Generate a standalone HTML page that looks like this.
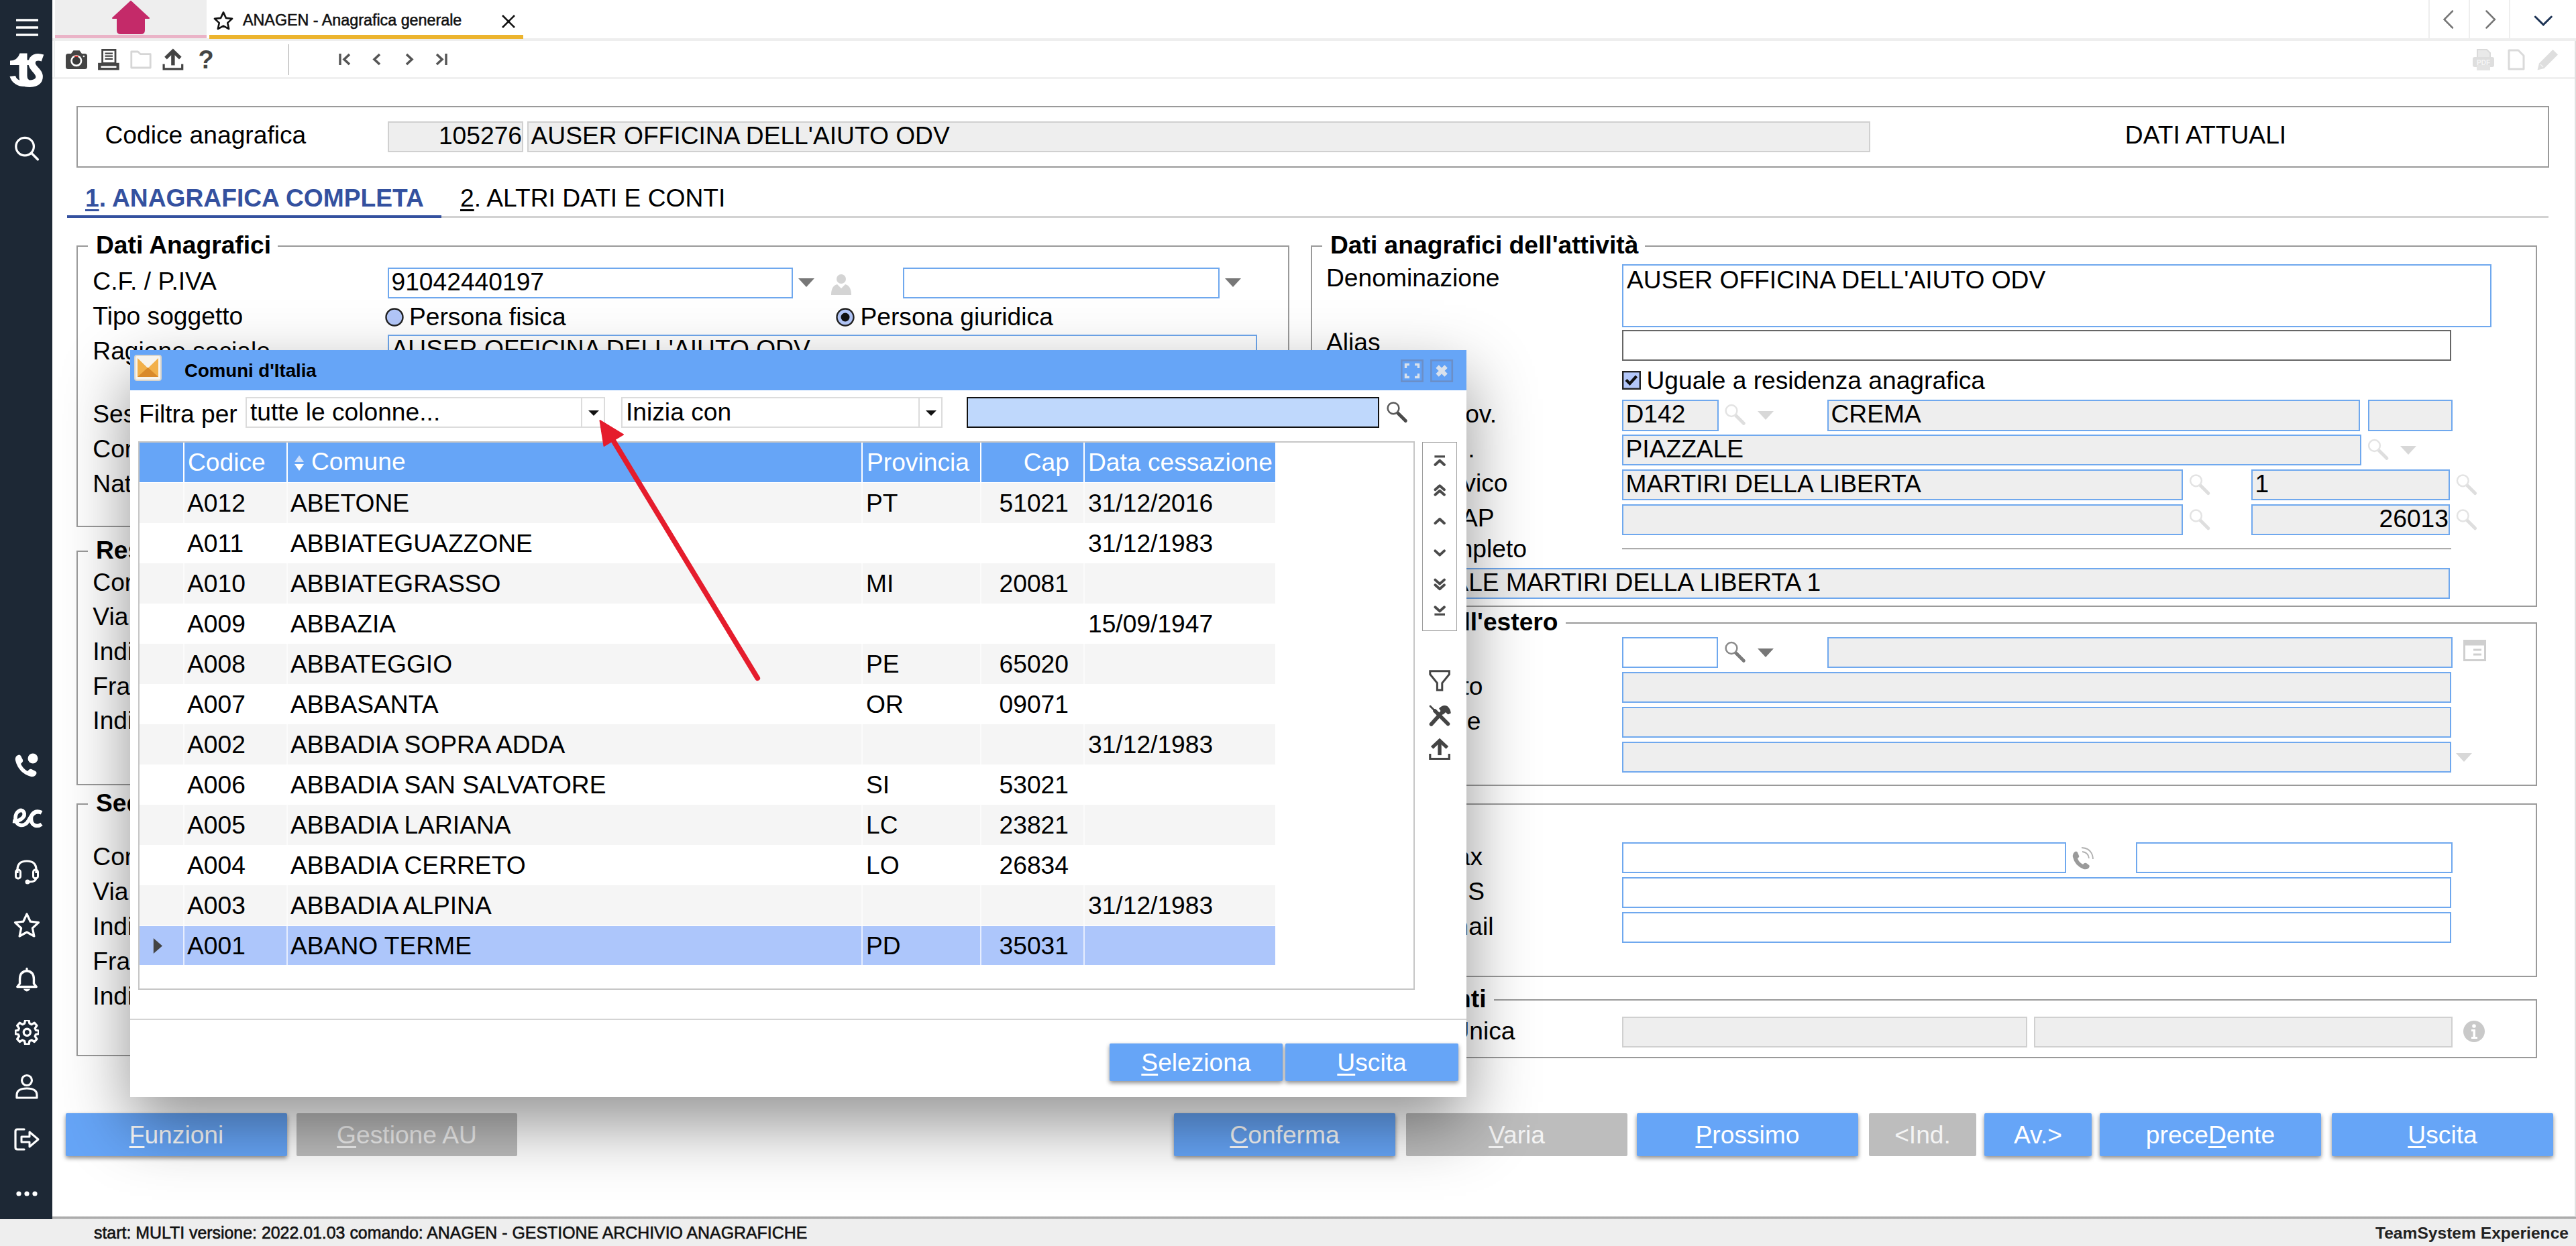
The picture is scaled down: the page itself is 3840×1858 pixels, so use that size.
<!DOCTYPE html>
<html lang="it"><head><meta charset="utf-8"><title>ANAGEN - Anagrafica generale</title>
<style>
html,body{margin:0;padding:0;background:#fff;}
body{width:3840px;height:1858px;overflow:hidden;font-family:"Liberation Sans",sans-serif;}
#root{position:relative;width:3840px;height:1858px;overflow:hidden;background:#fff;}
#root div,#root svg.a{position:absolute;box-sizing:border-box;}
.t{white-space:nowrap;}
.i{font-size:37.2px;white-space:nowrap;overflow:hidden;padding:0 0 0 3.5px;color:#000;}
.ib{background:#fff;border:2px solid #6fa8ee;}
.id{background:#eee;border:2px solid #6fa8ee;}
.ir{background:#eee;border:2px solid #d0d0d0;}
.ik{background:#fff;border:2px solid #666;}
.grp{border:2px solid #9a9a9a;}
.btn{background:#66a5f7;color:#fff;font-size:37.2px;text-align:center;box-shadow:0 3px 6px rgba(0,0,0,.45);border-radius:2px;}
.btn.g{background:#bdbdbd;color:#f4f4f4;box-shadow:none;}
u{text-decoration-thickness:3px;text-underline-offset:4px;}

</style></head>
<body>
<div id="root">
<div style="left:78.0px;top:57.0px;width:3762.0px;height:4.0px;background:#eeeeee;"></div>
<div style="left:78.0px;top:115.0px;width:3762.0px;height:3.0px;background:#f0f0f0;"></div>
<div style="left:82.0px;top:0.0px;width:226.0px;height:57.0px;background:#eeeeee;"></div>
<div style="left:82.0px;top:52.0px;width:226.0px;height:5.4px;background:#eab3c7;"></div>
<svg class="a" style="left:166.0px;top:1.0px;" width="58" height="50" viewBox="0 0 58 50"><path d="M29 1 L56 26 H49 V44 Q49 49 44 49 H14 Q9 49 9 44 V26 H2 Z" fill="#c42a69" stroke="#c42a69" stroke-width="2" stroke-linejoin="round"/></svg>
<div style="left:312.0px;top:52.0px;width:468.0px;height:5.5px;background:#ecb42e;"></div>
<svg class="a" style="left:318.0px;top:16.0px;" width="30" height="29" viewBox="0 0 32 31"><path d="M16 2.5 L20.2 11.6 L30 12.7 L22.7 19.4 L24.7 29 L16 24.1 L7.3 29 L9.3 19.4 L2 12.7 L11.8 11.6 Z" fill="none" stroke="#111" stroke-width="2.8" stroke-linejoin="round"/></svg>
<div class="t" style="top:17.4px;font-size:23.3px;line-height:27px;color:#111;left:362.0px;-webkit-text-stroke:0.55px #111;">ANAGEN - Anagrafica generale</div>
<svg class="a" style="left:747.0px;top:21.0px;" width="22" height="22" viewBox="0 0 22 22"><path d="M2 2 L20 20 M20 2 L2 20" stroke="#111" stroke-width="2.6" fill="none"/></svg>
<div style="left:3620.0px;top:0.0px;width:2.0px;height:57.0px;background:#eeeeee;"></div>
<div style="left:3680.0px;top:0.0px;width:2.0px;height:57.0px;background:#eeeeee;"></div>
<div style="left:3740.0px;top:0.0px;width:2.0px;height:57.0px;background:#eeeeee;"></div>
<svg class="a" style="left:3636px;top:10px;" width="28" height="38" viewBox="3636 10 28 38"><path d="M3656 16.500 L3643.600 29 L3656 41.500" stroke="#777" stroke-width="2.5" stroke-linecap="round" fill="none"/></svg>
<svg class="a" style="left:3699px;top:10px;" width="28" height="38" viewBox="3699 10 28 38"><path d="M3706.500 16.500 L3718.900 29 L3706.500 41.500" stroke="#777" stroke-width="2.5" stroke-linecap="round" fill="none"/></svg>
<svg class="a" style="left:3772px;top:18px;" width="38" height="26" viewBox="3772 18 38 26"><path d="M3779.300 25 L3791.300 36.800 L3803.300 25" stroke="#1f3556" stroke-width="3" stroke-linecap="round" fill="none"/></svg>
<svg class="a" style="left:96px;top:73px;" width="37" height="33" viewBox="96 73 37 33"><path d="M101.5 80 H106 L109.5 75.3 H118.5 L122 80 H126.5 Q130 80 130 83.5 V99.5 Q130 103 126.5 103 H101.5 Q98 103 98 99.5 V83.5 Q98 80 101.5 80 Z" fill="#444"/><circle cx="113.8" cy="90.6" r="7.3" fill="#3a3a3a" stroke="#fff" stroke-width="2.6"/><path d="M110.6 83.6 Q113.8 82 117 83.6 L116 85.2 Q113.8 84.4 111.6 85.2 Z" fill="#d8322c"/><circle cx="124.9" cy="84" r="1.3" fill="#eee"/></svg>
<svg class="a" style="left:144px;top:72px;" width="36" height="34" viewBox="144 72 36 34"><rect x="152.6" y="74.4" width="19.4" height="20" fill="#fff" stroke="#444" stroke-width="2.8"/><path d="M156.5 79.7 H168 M156.5 83.7 H168 M156.5 87.8 H168" stroke="#444" stroke-width="2.2"/><rect x="146.1" y="93.8" width="31.6" height="10.6" fill="#444"/><rect x="150.5" y="98.4" width="23" height="2.6" fill="#fff"/></svg>
<svg class="a" style="left:192px;top:73px;" width="36" height="32" viewBox="192 73 36 32"><path d="M195.8 77 H205.5 L209.5 80.7 H224.2 V101 H195.8 Z" fill="#fff" stroke="#d6d6d6" stroke-width="2.8" stroke-linejoin="round"/></svg>
<svg class="a" style="left:240px;top:72px;" width="36" height="35" viewBox="240 72 36 35"><path d="M247.0 86.6 L257.9 76.1 L268.8 86.6" fill="none" stroke="#444" stroke-width="5.2" stroke-linejoin="miter"/><path d="M257.9 78.6 V97.39999999999999" stroke="#444" stroke-width="5.4"/><path d="M244.1 95.39999999999999 V102.8 H271.7 V95.39999999999999" fill="none" stroke="#444" stroke-width="3.2"/></svg>
<div class="t" style="top:67.3px;font-size:38px;line-height:44px;color:#444;font-weight:bold;left:295.5px;">?</div>
<div style="left:429.5px;top:66.0px;width:1.5px;height:46.0px;background:#a8a8a8;"></div>
<svg class="a" style="left:504.0px;top:79.0px;" width="20" height="19" viewBox="0 0 20 19"><path d="M3 1 V18" stroke="#555" stroke-width="3.4"/><path d="M17 2 L9 9.5 L17 17" stroke="#555" stroke-width="3.6" fill="none"/></svg>
<svg class="a" style="left:554.0px;top:79.0px;" width="16" height="19" viewBox="0 0 16 19"><path d="M12 2 L4 9.5 L12 17" stroke="#555" stroke-width="3.6" fill="none"/></svg>
<svg class="a" style="left:602.0px;top:79.0px;" width="16" height="19" viewBox="0 0 16 19"><path d="M4 2 L12 9.5 L4 17" stroke="#555" stroke-width="3.6" fill="none"/></svg>
<svg class="a" style="left:648.0px;top:79.0px;" width="20" height="19" viewBox="0 0 20 19"><path d="M17 1 V18" stroke="#555" stroke-width="3.4"/><path d="M3 2 L11 9.5 L3 17" stroke="#555" stroke-width="3.6" fill="none"/></svg>
<svg class="a" style="left:3685.0px;top:72.0px;" width="34" height="34" viewBox="0 0 34 34"><path d="M8 2 H22 L27 7 V14 H8 Z" fill="#e9e9e9" stroke="#dadada" stroke-width="2"/><rect x="1" y="13" width="32" height="15" rx="3" fill="#dedede"/><rect x="7" y="25" width="20" height="8" fill="#e4e4e4"/><text x="17" y="25" font-family="Liberation Sans, sans-serif" font-size="10" font-weight="bold" fill="#f6f6f6" text-anchor="middle">PDF</text></svg>
<svg class="a" style="left:3738.0px;top:73.0px;" width="26" height="32" viewBox="0 0 26 32"><path d="M2 2 H16 L24 10 V30 H2 Z" fill="#fff" stroke="#dadada" stroke-width="3" stroke-linejoin="round"/></svg>
<svg class="a" style="left:3781.0px;top:72.0px;" width="34" height="34" viewBox="0 0 34 34"><path d="M1.5 32.500 L4 22.500 L24.500 2 L32 9.500 L11.500 30 Z" fill="#dedede"/><path d="M6 24 L10 28" stroke="#f4f4f4" stroke-width="1.5"/></svg>
<div style="left:0.0px;top:1813.6px;width:3840.0px;height:4.8px;background:linear-gradient(#a2a2a2,#bcbcbc);"></div>
<div style="left:0.0px;top:1818.4px;width:3840.0px;height:39.6px;background:#eeeeee;"></div>
<div class="t" style="top:1823.9px;font-size:24.9px;line-height:29px;color:#111;left:140.0px;-webkit-text-stroke:0.6px #111;">start: MULTI versione: 2022.01.03 comando: ANAGEN - GESTIONE ARCHIVIO ANAGRAFICHE</div>
<div class="t" style="top:1824.5px;font-size:24.6px;line-height:28px;color:#222;font-weight:bold;right:11.0px;text-align:right;">TeamSystem Experience</div>
<div style="left:3837.5px;top:61.0px;width:2.5px;height:1752.0px;background:#e0e0e0;"></div>
<div style="left:80.0px;top:61.0px;width:2.0px;height:56.0px;background:#eef0f0;"></div>
<div style="left:0.0px;top:0.0px;width:78.0px;height:1818.0px;background:#1d2835;"></div>
<svg class="a" style="left:24.0px;top:27.0px;" width="33" height="28" viewBox="0 0 33 28"><path d="M1 3 H32 M1 14 H32 M1 25 H32" stroke="#fff" stroke-width="3.4" stroke-linecap="round"/></svg>
<svg class="a" style="left:12px;top:76px;" width="56" height="57" viewBox="12 76 56 57"><path d="M29.5 79.5 H40.5 V89.5 H49 V97 H40.5 V113 Q40.5 119 46 121 L41 128.5 Q28 126 28.5 113 V97 H15 V90.5 Q26 90.5 29.500 79.5 Z" fill="#fff"/><path d="M63.5 86.5 C55 83.5 47.5 86 47.5 94 C47.500 103 60 106 58.500 116 C57.500 123.500 48 126 38 124" fill="none" stroke="#fff" stroke-width="10.5"/><path d="M14.5 114 C19 128 34 132 47 127 L42 118 C32 122 25 120 23 113 Z" fill="#fff"/></svg>
<svg class="a" style="left:18px;top:200px;" width="44" height="43" viewBox="18 200 44 43"><circle cx="37.1" cy="218.6" r="13.3" fill="none" stroke="#fff" stroke-width="3.3"/><path d="M46.8 228.3 L56.3 237.8" stroke="#fff" stroke-width="3.5" stroke-linecap="round"/></svg>
<svg class="a" style="left:20.0px;top:1121.0px;" width="40" height="40" viewBox="0 0 40 40"><path d="M5 6 Q9 3 11 6 L14 12 Q15 14 13 16 L11 18 Q14 25 21 29 L23 27 Q25 25 27 26 L33 29 Q36 31 33 35 Q30 38 26 37 Q8 32 3 13 Q2 9 5 6 Z" fill="#fff"/><circle cx="29" cy="10" r="7.5" fill="#fff"/></svg>
<svg class="a" style="left:14px;top:1198px;" width="54" height="44" viewBox="14 1198 54 44"><path d="M19 1224.500 C29 1225.500 39 1218 35.500 1211 C32.500 1205.500 23 1209 23 1220 C23 1232 36 1234 42 1224.500 C46 1217 51 1208 61.500 1211.500" fill="none" stroke="#fff" stroke-width="5.6" stroke-linecap="butt"/><path d="M62 1212 C53 1207 45.500 1213 46.500 1222.500 C47.500 1232 56 1233.500 62 1229" fill="none" stroke="#fff" stroke-width="5.6"/></svg>
<svg class="a" style="left:20.0px;top:1280.0px;" width="40" height="40" viewBox="0 0 40 40"><path d="M6 22 V17 Q6 4 20 4 Q34 4 34 17 V22" fill="none" stroke="#fff" stroke-width="3.2"/><rect x="3.5" y="17" width="7" height="13" rx="3.2" fill="none" stroke="#fff" stroke-width="3"/><rect x="29.500" y="17" width="7" height="13" rx="3.2" fill="none" stroke="#fff" stroke-width="3"/><path d="M34 28 Q34 35 24 35" fill="none" stroke="#fff" stroke-width="3"/><circle cx="21" cy="35" r="3.5" fill="#fff"/></svg>
<svg class="a" style="left:20.0px;top:1360.0px;" width="40" height="40" viewBox="0 0 40 40"><path d="M20 3 L25.3 14.2 L37.5 15.6 L28.4 24 L30.9 36 L20 30 L9.1 36 L11.6 24 L2.5 15.6 L14.7 14.2 Z" fill="none" stroke="#fff" stroke-width="3.2" stroke-linejoin="round"/></svg>
<svg class="a" style="left:21.0px;top:1441.5px;" width="38" height="40" viewBox="0 0 40 42"><path d="M20 6 Q9 7 9 19 V26 L5 31 H35 L31 26 V19 Q31 7 20 6 Z" fill="none" stroke="#fff" stroke-width="3.6" stroke-linejoin="round"/><path d="M20 2.500 V6" stroke="#fff" stroke-width="3.4" stroke-linecap="round"/><path d="M16 35 Q20 40 24 35 Z" fill="#fff" stroke="#fff" stroke-width="1.5"/></svg>
<svg class="a" style="left:21.7px;top:1521.0px;" width="36.6" height="36.6" viewBox="0 0 40 40"><path d="M17 2 H23 L24 7 L27.5 8.8 L32 6 L36 10.5 L33 15 L34.3 18 L39 19 V24 L34.3 25 L33 28 L36 32.5 L32 37 L27.5 34.2 L24 36 L23 41 H17 L16 36 L12.5 34.2 L8 37 L4 32.5 L7 28 L5.7 25 L1 24 V19 L5.7 18 L7 15 L4 10.5 L8 6 L12.5 8.8 L16 7 Z" transform="translate(0,-1.5)" fill="none" stroke="#fff" stroke-width="3.6" stroke-linejoin="round"/><circle cx="20" cy="20" r="5.5" fill="none" stroke="#fff" stroke-width="3.6"/></svg>
<svg class="a" style="left:22.0px;top:1600.0px;" width="36" height="40" viewBox="0 0 36 40"><circle cx="18" cy="11" r="7.5" fill="none" stroke="#fff" stroke-width="3.2"/><path d="M3 37 V33 Q3 23 18 23 Q33 23 33 33 V37 Z" fill="none" stroke="#fff" stroke-width="3.2" stroke-linejoin="round"/></svg>
<svg class="a" style="left:20.0px;top:1681.0px;" width="40" height="36" viewBox="0 0 40 36"><path d="M16 3 H6 Q3 3 3 6 V30 Q3 33 6 33 H16" fill="none" stroke="#fff" stroke-width="3.2" stroke-linecap="round"/><path d="M12 14 H24 V7 L37 18 L24 29 V22 H12 Z" fill="none" stroke="#fff" stroke-width="3" stroke-linejoin="round"/></svg>
<svg class="a" style="left:23.0px;top:1774.0px;" width="34" height="12" viewBox="0 0 34 12"><circle cx="5" cy="6" r="3.6" fill="#fff"/><circle cx="17" cy="6" r="3.6" fill="#fff"/><circle cx="29" cy="6" r="3.6" fill="#fff"/></svg>
<div style="left:114.0px;top:158.0px;width:3686.0px;height:92.0px;border:2px solid #9a9a9a;"></div>
<div class="t" style="top:179.6px;font-size:37.2px;line-height:43px;color:#000;left:156.5px;">Codice anagrafica</div>
<div class="i ir" style="left:578.0px;top:180.5px;width:202.0px;height:46.3px;line-height:39.7px;text-align:right;padding-right:0px;">105276</div>
<div class="i ir" style="left:786.0px;top:180.5px;width:2002.0px;height:46.3px;line-height:39.7px;">AUSER OFFICINA DELL'AIUTO ODV</div>
<div class="t" style="top:179.6px;font-size:37.2px;line-height:43px;color:#000;left:2288.0px;width:2000px;text-align:center;">DATI ATTUALI</div>
<div style="left:100.0px;top:322.0px;width:3699.0px;height:3.0px;background:#d2d2d2;"></div>
<div style="left:100.0px;top:320.6px;width:558.0px;height:4.4px;background:#34519f;"></div>
<div class="t" style="top:273.6px;font-size:37.2px;line-height:43px;color:#34519f;font-weight:bold;left:127.0px;"><u>1</u>. ANAGRAFICA COMPLETA</div>
<div class="t" style="top:273.6px;font-size:37.2px;line-height:43px;color:#000;left:686.0px;"><u>2</u>. ALTRI DATI E CONTI</div>
<div class="grp" style="left:114.0px;top:366.0px;width:1808.0px;height:420.0px;"></div>
<div style="left:131.0px;top:363.0px;width:283.0px;height:8.0px;background:#fff;"></div>
<div class="t" style="top:344.1px;font-size:37.2px;line-height:43px;color:#000;font-weight:bold;left:143.0px;">Dati Anagrafici</div>
<div class="t" style="top:397.6px;font-size:37.2px;line-height:43px;color:#000;left:138.3px;">C.F. / P.IVA</div>
<div class="i ib" style="left:578.0px;top:399.0px;width:604.0px;height:45.8px;line-height:39.2px;">91042440197</div>
<svg class="a" style="left:1190.0px;top:415.0px;" width="24" height="13" viewBox="0 0 24 13"><path d="M0 0 H24 L12 13 Z" fill="#777"/></svg>
<svg class="a" style="left:1238.0px;top:408.0px;" width="32" height="33" viewBox="0 0 32 33"><circle cx="16" cy="8" r="7" fill="#d4d4d4"/><path d="M1 32 Q1 18 10 16 L16 22 L22 16 Q31 18 31 32 Z" fill="#d4d4d4"/></svg>
<div class="i ib" style="left:1346.0px;top:399.0px;width:472.0px;height:45.8px;line-height:39.2px;"></div>
<svg class="a" style="left:1826.0px;top:415.0px;" width="24" height="13" viewBox="0 0 24 13"><path d="M0 0 H24 L12 13 Z" fill="#777"/></svg>
<div class="t" style="top:449.6px;font-size:37.2px;line-height:43px;color:#000;left:138.3px;">Tipo soggetto</div>
<svg class="a" style="left:572.5px;top:458.0px;" width="30" height="30" viewBox="0 0 30 30"><circle cx="15" cy="15" r="12.5" fill="#b3c7f9" stroke="#222" stroke-width="2.4"/></svg>
<div class="t" style="top:451.1px;font-size:37.2px;line-height:43px;color:#000;left:610.0px;">Persona fisica</div>
<svg class="a" style="left:1245.0px;top:458.0px;" width="30" height="30" viewBox="0 0 30 30"><circle cx="15" cy="15" r="12.5" fill="#b3c7f9" stroke="#222" stroke-width="2.4"/><circle cx="15" cy="15" r="6.5" fill="#111"/></svg>
<div class="t" style="top:451.1px;font-size:37.2px;line-height:43px;color:#000;left:1282.5px;">Persona giuridica</div>
<div class="t" style="top:501.6px;font-size:37.2px;line-height:43px;color:#000;left:138.3px;">Ragione sociale</div>
<div class="i ib" style="left:578.0px;top:499.0px;width:1296.0px;height:45.8px;line-height:39.2px;">AUSER OFFICINA DELL'AIUTO ODV</div>
<div class="t" style="top:595.6px;font-size:37.2px;line-height:43px;color:#000;left:138.3px;">Sesso</div>
<div class="t" style="top:647.6px;font-size:37.2px;line-height:43px;color:#000;left:138.3px;">Comune</div>
<div class="t" style="top:699.6px;font-size:37.2px;line-height:43px;color:#000;left:138.3px;">Nato il</div>
<div class="grp" style="left:114.0px;top:821.0px;width:1808.0px;height:350.0px;"></div>
<div style="left:131.0px;top:818.0px;width:193.0px;height:8.0px;background:#fff;"></div>
<div class="t" style="top:799.1px;font-size:37.2px;line-height:43px;color:#000;font-weight:bold;left:143.0px;">Residenza</div>
<div class="t" style="top:846.6px;font-size:37.2px;line-height:43px;color:#000;left:138.3px;">Comune</div>
<div class="t" style="top:897.6px;font-size:37.2px;line-height:43px;color:#000;left:138.3px;">Via</div>
<div class="t" style="top:949.6px;font-size:37.2px;line-height:43px;color:#000;left:138.3px;">Indirizzo</div>
<div class="t" style="top:1001.6px;font-size:37.2px;line-height:43px;color:#000;left:138.3px;">Frazione</div>
<div class="t" style="top:1052.6px;font-size:37.2px;line-height:43px;color:#000;left:138.3px;">Indirizzo completo</div>
<div class="grp" style="left:114.0px;top:1198.0px;width:1808.0px;height:377.0px;"></div>
<div style="left:131.0px;top:1195.0px;width:213.0px;height:8.0px;background:#fff;"></div>
<div class="t" style="top:1176.1px;font-size:37.2px;line-height:43px;color:#000;font-weight:bold;left:143.0px;">Sede legale</div>
<div class="t" style="top:1255.6px;font-size:37.2px;line-height:43px;color:#000;left:138.3px;">Comune</div>
<div class="t" style="top:1307.6px;font-size:37.2px;line-height:43px;color:#000;left:138.3px;">Via</div>
<div class="t" style="top:1359.6px;font-size:37.2px;line-height:43px;color:#000;left:138.3px;">Indirizzo</div>
<div class="t" style="top:1411.6px;font-size:37.2px;line-height:43px;color:#000;left:138.3px;">Frazione</div>
<div class="t" style="top:1463.6px;font-size:37.2px;line-height:43px;color:#000;left:138.3px;">Indirizzo completo</div>
<div class="grp" style="left:1954.0px;top:366.0px;width:1828.0px;height:539.0px;"></div>
<div style="left:1971.0px;top:363.0px;width:481.0px;height:8.0px;background:#fff;"></div>
<div class="t" style="top:344.1px;font-size:37.2px;line-height:43px;color:#000;font-weight:bold;left:1983.0px;">Dati anagrafici dell'attività</div>
<div class="t" style="top:392.6px;font-size:37.2px;line-height:43px;color:#000;left:1977.0px;">Denominazione</div>
<div class="i ib" style="left:2418px;top:394px;width:1296px;height:94px;line-height:42px;padding-top:0px;padding-left:5px;">AUSER OFFICINA DELL'AIUTO ODV</div>
<div class="t" style="top:488.6px;font-size:37.2px;line-height:43px;color:#000;left:1977.0px;">Alias</div>
<div class="i ik" style="left:2418.0px;top:492.0px;width:1236.0px;height:45.8px;line-height:39.2px;"></div>
<svg class="a" style="left:2418.0px;top:553.0px;" width="28" height="28" viewBox="0 0 28 28"><rect x="1.2" y="1.2" width="25.6" height="25.6" fill="#b3c7f9" stroke="#222" stroke-width="2.4"/><path d="M6 13.500 L11.500 19 L21.500 8" fill="none" stroke="#111" stroke-width="4.2"/></svg>
<div class="t" style="top:545.6px;font-size:37.2px;line-height:43px;color:#000;left:2454.5px;">Uguale a residenza anagrafica</div>
<div class="t" style="top:595.6px;font-size:37.2px;line-height:43px;color:#000;right:1609.0px;text-align:right;">Comune / Prov.</div>
<div class="i id" style="left:2418.0px;top:596.3px;width:143.5px;height:46.5px;line-height:39.9px;">D142</div>
<svg class="a" style="left:2569px;top:600px;" width="36" height="36" viewBox="2569 600 36 36"><path d="M2587.5 619.5 L2599.3 631.3" stroke="#dedede" stroke-width="5" stroke-linecap="round"/><circle cx="2581" cy="612.5" r="8.4" fill="#fff" stroke="#e3e3e3" stroke-width="2.5"/></svg>
<svg class="a" style="left:2619.5px;top:612.5px;" width="24" height="13" viewBox="0 0 24 13"><path d="M0 0 H24 L12 13 Z" fill="#d8d8d8"/></svg>
<div class="i id" style="left:2724.0px;top:596.3px;width:794.0px;height:46.5px;line-height:39.9px;">CREMA</div>
<div class="i id" style="left:3530.0px;top:596.3px;width:126.0px;height:46.5px;line-height:39.9px;"></div>
<div class="t" style="top:647.6px;font-size:37.2px;line-height:43px;color:#000;right:1641.5px;text-align:right;">Toponimo&nbsp;.</div>
<div class="i id" style="left:2418.0px;top:648.0px;width:1102.0px;height:45.8px;line-height:39.2px;">PIAZZALE</div>
<svg class="a" style="left:3527px;top:652px;" width="36" height="36" viewBox="3527 652 36 36"><path d="M3546.0 671.5 L3557.8 683.3" stroke="#dedede" stroke-width="5" stroke-linecap="round"/><circle cx="3539.5" cy="664.5" r="8.4" fill="#fff" stroke="#e3e3e3" stroke-width="2.5"/></svg>
<svg class="a" style="left:3578.0px;top:664.5px;" width="24" height="13" viewBox="0 0 24 13"><path d="M0 0 H24 L12 13 Z" fill="#d8d8d8"/></svg>
<div class="t" style="top:698.6px;font-size:37.2px;line-height:43px;color:#000;right:1592.5px;text-align:right;">Via / N. civico</div>
<div class="i id" style="left:2418.0px;top:700.0px;width:836.0px;height:45.8px;line-height:39.2px;">MARTIRI DELLA LIBERTA</div>
<svg class="a" style="left:3261px;top:704px;" width="36" height="36" viewBox="3261 704 36 36"><path d="M3280.0 723.8 L3291.8 735.5999999999999" stroke="#dedede" stroke-width="5" stroke-linecap="round"/><circle cx="3273.5" cy="716.8" r="8.4" fill="#fff" stroke="#e3e3e3" stroke-width="2.5"/></svg>
<div class="i id" style="left:3356.0px;top:700.0px;width:296.0px;height:45.8px;line-height:39.2px;">1</div>
<svg class="a" style="left:3659px;top:704px;" width="36" height="36" viewBox="3659 704 36 36"><path d="M3677.8 723.8 L3689.6000000000004 735.5999999999999" stroke="#dedede" stroke-width="5" stroke-linecap="round"/><circle cx="3671.3" cy="716.8" r="8.4" fill="#fff" stroke="#e3e3e3" stroke-width="2.5"/></svg>
<div class="t" style="top:750.6px;font-size:37.2px;line-height:43px;color:#000;right:1612.5px;text-align:right;">Frazione / CAP</div>
<div class="i id" style="left:2418.0px;top:752.0px;width:836.0px;height:45.8px;line-height:39.2px;"></div>
<svg class="a" style="left:3261px;top:757px;" width="36" height="36" viewBox="3261 757 36 36"><path d="M3280.0 776.0 L3291.8 787.8" stroke="#dedede" stroke-width="5" stroke-linecap="round"/><circle cx="3273.5" cy="769.0" r="8.4" fill="#fff" stroke="#e3e3e3" stroke-width="2.5"/></svg>
<div class="i id" style="left:3356.0px;top:752.0px;width:296.0px;height:45.8px;line-height:39.2px;text-align:right;padding-right:0px;">26013</div>
<svg class="a" style="left:3659px;top:757px;" width="36" height="36" viewBox="3659 757 36 36"><path d="M3677.8 776.0 L3689.6000000000004 787.8" stroke="#dedede" stroke-width="5" stroke-linecap="round"/><circle cx="3671.3" cy="769.0" r="8.4" fill="#fff" stroke="#e3e3e3" stroke-width="2.5"/></svg>
<div class="t" style="top:796.6px;font-size:37.2px;line-height:43px;color:#000;right:1564.0px;text-align:right;">Indirizzo completo</div>
<div style="left:2418.0px;top:818.0px;width:1236.0px;height:1.3px;background:#333;"></div>
<div class="i id" style="left:2053.5px;top:847.0px;width:1598.5px;height:45.8px;line-height:39.2px;">PIAZZALE MARTIRI DELLA LIBERTA 1</div>
<div class="grp" style="left:1954.0px;top:928.3px;width:1828.0px;height:243.7px;"></div>
<div style="left:1971.0px;top:925.3px;width:362.5px;height:8.0px;background:#fff;"></div>
<div class="t" style="top:906.4px;font-size:37.2px;line-height:43px;color:#000;font-weight:bold;right:1517.5px;text-align:right;">Residenza all'estero</div>
<div class="t" style="top:949.6px;font-size:37.2px;line-height:43px;color:#000;left:1977.0px;">Stato</div>
<div class="i ib" style="left:2418.0px;top:950.0px;width:143.0px;height:45.8px;line-height:39.2px;"></div>
<svg class="a" style="left:2569px;top:954px;" width="36" height="36" viewBox="2569 954 36 36"><path d="M2587.5 973.5 L2599.3 985.3" stroke="#7a7a7a" stroke-width="5" stroke-linecap="round"/><circle cx="2581" cy="966.5" r="8.4" fill="#fff" stroke="#8a8a8a" stroke-width="2.5"/></svg>
<svg class="a" style="left:2619.5px;top:966.5px;" width="24" height="13" viewBox="0 0 24 13"><path d="M0 0 H24 L12 13 Z" fill="#777"/></svg>
<div class="i id" style="left:2724.0px;top:950.0px;width:932.0px;height:45.8px;line-height:39.2px;"></div>
<svg class="a" style="left:3672.0px;top:954.0px;" width="34" height="32" viewBox="0 0 34 32"><rect x="1.5" y="1.5" width="31" height="29" fill="#fff" stroke="#cfcfcf" stroke-width="3"/><rect x="1.5" y="1.5" width="31" height="7" fill="#cfcfcf"/><path d="M15 15 H27 M15 22 H27" stroke="#cfcfcf" stroke-width="3"/></svg>
<div class="t" style="top:1001.6px;font-size:37.2px;line-height:43px;color:#000;right:1629.5px;text-align:right;">Città / Stato</div>
<div class="i id" style="left:2418.0px;top:1002.0px;width:1236.0px;height:45.8px;line-height:39.2px;"></div>
<div class="t" style="top:1053.6px;font-size:37.2px;line-height:43px;color:#000;right:1632.5px;text-align:right;">Via / Frazione</div>
<div class="i id" style="left:2418.0px;top:1054.0px;width:1236.0px;height:45.8px;line-height:39.2px;"></div>
<div class="i id" style="left:2418.0px;top:1106.0px;width:1236.0px;height:45.8px;line-height:39.2px;"></div>
<svg class="a" style="left:3661.0px;top:1123.0px;" width="24" height="13" viewBox="0 0 24 13"><path d="M0 0 H24 L12 13 Z" fill="#d8d8d8"/></svg>
<div class="grp" style="left:1954.0px;top:1198.0px;width:1828.0px;height:258.5px;"></div>
<div class="t" style="top:1255.6px;font-size:37.2px;line-height:43px;color:#000;right:1630.0px;text-align:right;">Telefono / Fax</div>
<div class="i ib" style="left:2418.0px;top:1256.0px;width:662.0px;height:45.8px;line-height:39.2px;"></div>
<svg class="a" style="left:3086.0px;top:1262.0px;" width="36" height="36" viewBox="0 0 36 36"><path d="M6 9 Q9 6 11 9 L13 14 Q14 16 12 17 L11 18 Q13 24 19 27 L20 26 Q22 24 24 25 L28 28 Q30 30 27 33 Q24 35 20 34 Q7 29 4 16 Q3 12 6 9 Z" fill="#9a9a9a"/><path d="M18 8 Q27 9 28 18 M17 2 Q33 3 34 19" fill="none" stroke="#b0b0b0" stroke-width="1.8"/></svg>
<div class="i ib" style="left:3184.0px;top:1256.0px;width:472.0px;height:45.8px;line-height:39.2px;"></div>
<div class="t" style="top:1307.6px;font-size:37.2px;line-height:43px;color:#000;right:1627.0px;text-align:right;">Cellulare / SMS</div>
<div class="i ib" style="left:2418.0px;top:1308.0px;width:1236.0px;height:45.8px;line-height:39.2px;"></div>
<div class="t" style="top:1359.6px;font-size:37.2px;line-height:43px;color:#000;right:1613.5px;text-align:right;">PEC / E-mail</div>
<div class="i ib" style="left:2418.0px;top:1360.0px;width:1236.0px;height:45.8px;line-height:39.2px;"></div>
<div class="grp" style="left:1954.0px;top:1490.0px;width:1828.0px;height:88.0px;"></div>
<div style="left:1971.0px;top:1487.0px;width:255.5px;height:8.0px;background:#fff;"></div>
<div class="t" style="top:1468.1px;font-size:37.2px;line-height:43px;color:#000;font-weight:bold;right:1624.5px;text-align:right;">Dati identificanti</div>
<div class="t" style="top:1515.6px;font-size:37.2px;line-height:43px;color:#000;right:1581.5px;text-align:right;">Anagrafica Unica</div>
<div class="i ir" style="left:2418.0px;top:1516.0px;width:604.0px;height:45.8px;line-height:39.2px;"></div>
<div class="i ir" style="left:3032.0px;top:1516.0px;width:624.0px;height:45.8px;line-height:39.2px;"></div>
<svg class="a" style="left:3671.0px;top:1521.0px;" width="34" height="34" viewBox="0 0 34 34"><circle cx="17" cy="17" r="16" fill="#c9c9c9"/><path d="M13 14 H19 V25 H22 V28 H13 V25 H15.5 V17 H13 Z" fill="#fff"/><circle cx="17" cy="9" r="2.8" fill="#fff"/></svg>
<div class="btn" style="left:98.0px;top:1660.0px;width:330.0px;height:64.0px;line-height:65.0px;"><u>F</u>unzioni</div>
<div class="btn g" style="left:442.0px;top:1660.0px;width:329.0px;height:64.0px;line-height:65.0px;"><u>G</u>estione AU</div>
<div class="btn" style="left:1750.0px;top:1660.0px;width:330.0px;height:64.0px;line-height:65.0px;"><u>C</u>onferma</div>
<div class="btn g" style="left:2096.0px;top:1660.0px;width:330.0px;height:64.0px;line-height:65.0px;"><u>V</u>aria</div>
<div class="btn" style="left:2440.0px;top:1660.0px;width:330.0px;height:64.0px;line-height:65.0px;"><u>P</u>rossimo</div>
<div class="btn g" style="left:2786.0px;top:1660.0px;width:160.0px;height:64.0px;line-height:65.0px;">&lt;Ind.</div>
<div class="btn" style="left:2958.0px;top:1660.0px;width:160.0px;height:64.0px;line-height:65.0px;">Av.&gt;</div>
<div class="btn" style="left:3130.0px;top:1660.0px;width:330.0px;height:64.0px;line-height:65.0px;">prece<u>D</u>ente</div>
<div class="btn" style="left:3476.0px;top:1660.0px;width:330.0px;height:64.0px;line-height:65.0px;"><u>U</u>scita</div>
<div style="left:194.0px;top:522.0px;width:1992.0px;height:1114.0px;background:#fff;box-shadow:0 40px 94px 0 rgba(0,0,0,.43);"></div>
<div style="left:194.0px;top:522.0px;width:1992.0px;height:60.0px;background:#66a5f7;"></div>
<svg class="a" style="left:200.0px;top:529.0px;" width="41" height="39" viewBox="0 0 41 39"><rect x="1" y="1" width="39" height="37" rx="3" fill="#f7f4ee" stroke="#d8d4cc" stroke-width="2"/><path d="M5 5 L20.5 20 L36 5 V33 H5 Z" fill="#f2b04a"/><path d="M5 33 L20.5 19 L36 33 Z" fill="#d98a2b"/></svg>
<div class="t" style="top:536.7px;font-size:27.6px;line-height:32px;color:#000;font-weight:bold;left:275.0px;">Comuni d'Italia</div>
<svg class="a" style="left:2086px;top:534px;" width="38" height="38" viewBox="2086 534 38 38"><rect x="2089.3" y="537.3" width="31.4" height="31.4" fill="#62a1f5" stroke="#6b8fc8" stroke-width="2.6"/><path d="M2095.5 549 V543.5 H2101 M2109 543.5 H2114.5 V549 M2114.5 557 V562.500 H2109 M2101 562.500 H2095.500 V557" fill="none" stroke="#d9e1ec" stroke-width="3.4"/></svg>
<svg class="a" style="left:2130px;top:534px;" width="38" height="38" viewBox="2130 534 38 38"><rect x="2133.4" y="537.3" width="31.4" height="31.4" fill="#62a1f5" stroke="#6b8fc8" stroke-width="2.6"/><path d="M2142.600 546.500 L2155.600 559.500 M2155.600 546.500 L2142.600 559.500" fill="none" stroke="#d9e1ec" stroke-width="6.2"/></svg>
<div class="t" style="top:595.6px;font-size:37.2px;line-height:43px;color:#000;left:207.0px;">Filtra per</div>
<div style="left:366.0px;top:592.0px;width:536.0px;height:46.0px;background:#fff;border:2px solid #dcdcdc;"></div>
<div style="left:866.0px;top:592.0px;width:2.0px;height:46.0px;background:#dcdcdc;"></div>
<div class="t" style="top:592.6px;font-size:37.2px;line-height:43px;color:#000;left:373.0px;">tutte le colonne...</div>
<svg class="a" style="left:877.0px;top:612.0px;" width="16" height="8" viewBox="0 0 16 8"><path d="M0 0 H16 L8 8 Z" fill="#111"/></svg>
<div style="left:926.0px;top:592.0px;width:479.0px;height:46.0px;background:#fff;border:2px solid #dcdcdc;"></div>
<div style="left:1369.0px;top:592.0px;width:2.0px;height:46.0px;background:#dcdcdc;"></div>
<div class="t" style="top:592.6px;font-size:37.2px;line-height:43px;color:#000;left:933.0px;">Inizia con</div>
<svg class="a" style="left:1380.0px;top:612.0px;" width="16" height="8" viewBox="0 0 16 8"><path d="M0 0 H16 L8 8 Z" fill="#111"/></svg>
<div style="left:1441.0px;top:592.0px;width:615.0px;height:46.0px;background:#bfd8fc;border:2.5px solid #111;"></div>
<svg class="a" style="left:2065px;top:596px;" width="36" height="36" viewBox="2065 596 36 36"><path d="M2083.5 615.8 L2095.3 627.5999999999999" stroke="#4a4a4a" stroke-width="5" stroke-linecap="round"/><circle cx="2077" cy="608.8" r="8.4" fill="#fff" stroke="#5a5a5a" stroke-width="2.5"/></svg>
<div style="left:205.5px;top:658.0px;width:1903.5px;height:818.0px;border:2px solid #c6c6c6;background:#fff;"></div>
<div style="left:207.5px;top:660.0px;width:65.3px;height:59.0px;background:#66a5f7;"></div>
<div style="left:274.6px;top:660.0px;width:152.2px;height:59.0px;background:#66a5f7;"></div>
<div style="left:428.6px;top:660.0px;width:855.9px;height:59.0px;background:#66a5f7;"></div>
<div style="left:1286.2px;top:660.0px;width:175.0px;height:59.0px;background:#66a5f7;"></div>
<div style="left:1463.0px;top:660.0px;width:152.3px;height:59.0px;background:#66a5f7;"></div>
<div style="left:1617.0px;top:660.0px;width:284.0px;height:59.0px;background:#66a5f7;"></div>
<div class="t" style="top:668.1px;font-size:37.2px;line-height:43px;color:#fff;left:280.0px;">Codice</div>
<svg class="a" style="left:438.0px;top:678.0px;" width="16" height="25" viewBox="0 0 16 25"><path d="M8 1 L15 11 H1 Z" fill="#cfe0fb"/><path d="M8 24 L15 14 H1 Z" fill="#fff"/></svg>
<div class="t" style="top:666.6px;font-size:37.2px;line-height:43px;color:#fff;left:464.0px;">Comune</div>
<div class="t" style="top:668.1px;font-size:37.2px;line-height:43px;color:#fff;left:1292.0px;">Provincia</div>
<div class="t" style="top:668.1px;font-size:37.2px;line-height:43px;color:#fff;right:2246.0px;text-align:right;">Cap</div>
<div class="t" style="top:668.1px;font-size:37.2px;line-height:43px;color:#fff;left:1622.0px;">Data cessazione</div>
<div style="left:207.5px;top:720.0px;width:1693.5px;height:60.0px;background:#fbfbfb;"></div>
<div style="left:207.5px;top:720.0px;width:65.3px;height:60.0px;background:#f5f5f5;"></div>
<div style="left:274.6px;top:720.0px;width:152.2px;height:60.0px;background:#f5f5f5;"></div>
<div style="left:428.6px;top:720.0px;width:855.9px;height:60.0px;background:#f5f5f5;"></div>
<div style="left:1286.2px;top:720.0px;width:175.0px;height:60.0px;background:#f5f5f5;"></div>
<div style="left:1463.0px;top:720.0px;width:152.3px;height:60.0px;background:#f5f5f5;"></div>
<div style="left:1617.0px;top:720.0px;width:284.0px;height:60.0px;background:#f5f5f5;"></div>
<div class="t" style="top:728.6px;font-size:37.2px;line-height:43px;color:#000;left:279.0px;">A012</div>
<div class="t" style="top:728.6px;font-size:37.2px;line-height:43px;color:#000;left:433.0px;">ABETONE</div>
<div class="t" style="top:728.6px;font-size:37.2px;line-height:43px;color:#000;left:1291.0px;">PT</div>
<div class="t" style="top:728.6px;font-size:37.2px;line-height:43px;color:#000;right:2247.0px;text-align:right;">51021</div>
<div class="t" style="top:728.6px;font-size:37.2px;line-height:43px;color:#000;left:1622.0px;">31/12/2016</div>
<div style="left:207.5px;top:780.0px;width:1693.5px;height:60.0px;background:#ffffff;"></div>
<div style="left:207.5px;top:780.0px;width:65.3px;height:60.0px;background:#ffffff;"></div>
<div style="left:274.6px;top:780.0px;width:152.2px;height:60.0px;background:#ffffff;"></div>
<div style="left:428.6px;top:780.0px;width:855.9px;height:60.0px;background:#ffffff;"></div>
<div style="left:1286.2px;top:780.0px;width:175.0px;height:60.0px;background:#ffffff;"></div>
<div style="left:1463.0px;top:780.0px;width:152.3px;height:60.0px;background:#ffffff;"></div>
<div style="left:1617.0px;top:780.0px;width:284.0px;height:60.0px;background:#ffffff;"></div>
<div class="t" style="top:788.6px;font-size:37.2px;line-height:43px;color:#000;left:279.0px;">A011</div>
<div class="t" style="top:788.6px;font-size:37.2px;line-height:43px;color:#000;left:433.0px;">ABBIATEGUAZZONE</div>
<div class="t" style="top:788.6px;font-size:37.2px;line-height:43px;color:#000;left:1291.0px;"></div>
<div class="t" style="top:788.6px;font-size:37.2px;line-height:43px;color:#000;right:2247.0px;text-align:right;"></div>
<div class="t" style="top:788.6px;font-size:37.2px;line-height:43px;color:#000;left:1622.0px;">31/12/1983</div>
<div style="left:207.5px;top:840.0px;width:1693.5px;height:60.0px;background:#fbfbfb;"></div>
<div style="left:207.5px;top:840.0px;width:65.3px;height:60.0px;background:#f5f5f5;"></div>
<div style="left:274.6px;top:840.0px;width:152.2px;height:60.0px;background:#f5f5f5;"></div>
<div style="left:428.6px;top:840.0px;width:855.9px;height:60.0px;background:#f5f5f5;"></div>
<div style="left:1286.2px;top:840.0px;width:175.0px;height:60.0px;background:#f5f5f5;"></div>
<div style="left:1463.0px;top:840.0px;width:152.3px;height:60.0px;background:#f5f5f5;"></div>
<div style="left:1617.0px;top:840.0px;width:284.0px;height:60.0px;background:#f5f5f5;"></div>
<div class="t" style="top:848.6px;font-size:37.2px;line-height:43px;color:#000;left:279.0px;">A010</div>
<div class="t" style="top:848.6px;font-size:37.2px;line-height:43px;color:#000;left:433.0px;">ABBIATEGRASSO</div>
<div class="t" style="top:848.6px;font-size:37.2px;line-height:43px;color:#000;left:1291.0px;">MI</div>
<div class="t" style="top:848.6px;font-size:37.2px;line-height:43px;color:#000;right:2247.0px;text-align:right;">20081</div>
<div class="t" style="top:848.6px;font-size:37.2px;line-height:43px;color:#000;left:1622.0px;"></div>
<div style="left:207.5px;top:900.0px;width:1693.5px;height:60.0px;background:#ffffff;"></div>
<div style="left:207.5px;top:900.0px;width:65.3px;height:60.0px;background:#ffffff;"></div>
<div style="left:274.6px;top:900.0px;width:152.2px;height:60.0px;background:#ffffff;"></div>
<div style="left:428.6px;top:900.0px;width:855.9px;height:60.0px;background:#ffffff;"></div>
<div style="left:1286.2px;top:900.0px;width:175.0px;height:60.0px;background:#ffffff;"></div>
<div style="left:1463.0px;top:900.0px;width:152.3px;height:60.0px;background:#ffffff;"></div>
<div style="left:1617.0px;top:900.0px;width:284.0px;height:60.0px;background:#ffffff;"></div>
<div class="t" style="top:908.6px;font-size:37.2px;line-height:43px;color:#000;left:279.0px;">A009</div>
<div class="t" style="top:908.6px;font-size:37.2px;line-height:43px;color:#000;left:433.0px;">ABBAZIA</div>
<div class="t" style="top:908.6px;font-size:37.2px;line-height:43px;color:#000;left:1291.0px;"></div>
<div class="t" style="top:908.6px;font-size:37.2px;line-height:43px;color:#000;right:2247.0px;text-align:right;"></div>
<div class="t" style="top:908.6px;font-size:37.2px;line-height:43px;color:#000;left:1622.0px;">15/09/1947</div>
<div style="left:207.5px;top:960.0px;width:1693.5px;height:60.0px;background:#fbfbfb;"></div>
<div style="left:207.5px;top:960.0px;width:65.3px;height:60.0px;background:#f5f5f5;"></div>
<div style="left:274.6px;top:960.0px;width:152.2px;height:60.0px;background:#f5f5f5;"></div>
<div style="left:428.6px;top:960.0px;width:855.9px;height:60.0px;background:#f5f5f5;"></div>
<div style="left:1286.2px;top:960.0px;width:175.0px;height:60.0px;background:#f5f5f5;"></div>
<div style="left:1463.0px;top:960.0px;width:152.3px;height:60.0px;background:#f5f5f5;"></div>
<div style="left:1617.0px;top:960.0px;width:284.0px;height:60.0px;background:#f5f5f5;"></div>
<div class="t" style="top:968.6px;font-size:37.2px;line-height:43px;color:#000;left:279.0px;">A008</div>
<div class="t" style="top:968.6px;font-size:37.2px;line-height:43px;color:#000;left:433.0px;">ABBATEGGIO</div>
<div class="t" style="top:968.6px;font-size:37.2px;line-height:43px;color:#000;left:1291.0px;">PE</div>
<div class="t" style="top:968.6px;font-size:37.2px;line-height:43px;color:#000;right:2247.0px;text-align:right;">65020</div>
<div class="t" style="top:968.6px;font-size:37.2px;line-height:43px;color:#000;left:1622.0px;"></div>
<div style="left:207.5px;top:1020.0px;width:1693.5px;height:60.0px;background:#ffffff;"></div>
<div style="left:207.5px;top:1020.0px;width:65.3px;height:60.0px;background:#ffffff;"></div>
<div style="left:274.6px;top:1020.0px;width:152.2px;height:60.0px;background:#ffffff;"></div>
<div style="left:428.6px;top:1020.0px;width:855.9px;height:60.0px;background:#ffffff;"></div>
<div style="left:1286.2px;top:1020.0px;width:175.0px;height:60.0px;background:#ffffff;"></div>
<div style="left:1463.0px;top:1020.0px;width:152.3px;height:60.0px;background:#ffffff;"></div>
<div style="left:1617.0px;top:1020.0px;width:284.0px;height:60.0px;background:#ffffff;"></div>
<div class="t" style="top:1028.6px;font-size:37.2px;line-height:43px;color:#000;left:279.0px;">A007</div>
<div class="t" style="top:1028.6px;font-size:37.2px;line-height:43px;color:#000;left:433.0px;">ABBASANTA</div>
<div class="t" style="top:1028.6px;font-size:37.2px;line-height:43px;color:#000;left:1291.0px;">OR</div>
<div class="t" style="top:1028.6px;font-size:37.2px;line-height:43px;color:#000;right:2247.0px;text-align:right;">09071</div>
<div class="t" style="top:1028.6px;font-size:37.2px;line-height:43px;color:#000;left:1622.0px;"></div>
<div style="left:207.5px;top:1080.0px;width:1693.5px;height:60.0px;background:#fbfbfb;"></div>
<div style="left:207.5px;top:1080.0px;width:65.3px;height:60.0px;background:#f5f5f5;"></div>
<div style="left:274.6px;top:1080.0px;width:152.2px;height:60.0px;background:#f5f5f5;"></div>
<div style="left:428.6px;top:1080.0px;width:855.9px;height:60.0px;background:#f5f5f5;"></div>
<div style="left:1286.2px;top:1080.0px;width:175.0px;height:60.0px;background:#f5f5f5;"></div>
<div style="left:1463.0px;top:1080.0px;width:152.3px;height:60.0px;background:#f5f5f5;"></div>
<div style="left:1617.0px;top:1080.0px;width:284.0px;height:60.0px;background:#f5f5f5;"></div>
<div class="t" style="top:1088.6px;font-size:37.2px;line-height:43px;color:#000;left:279.0px;">A002</div>
<div class="t" style="top:1088.6px;font-size:37.2px;line-height:43px;color:#000;left:433.0px;">ABBADIA SOPRA ADDA</div>
<div class="t" style="top:1088.6px;font-size:37.2px;line-height:43px;color:#000;left:1291.0px;"></div>
<div class="t" style="top:1088.6px;font-size:37.2px;line-height:43px;color:#000;right:2247.0px;text-align:right;"></div>
<div class="t" style="top:1088.6px;font-size:37.2px;line-height:43px;color:#000;left:1622.0px;">31/12/1983</div>
<div style="left:207.5px;top:1140.0px;width:1693.5px;height:60.0px;background:#ffffff;"></div>
<div style="left:207.5px;top:1140.0px;width:65.3px;height:60.0px;background:#ffffff;"></div>
<div style="left:274.6px;top:1140.0px;width:152.2px;height:60.0px;background:#ffffff;"></div>
<div style="left:428.6px;top:1140.0px;width:855.9px;height:60.0px;background:#ffffff;"></div>
<div style="left:1286.2px;top:1140.0px;width:175.0px;height:60.0px;background:#ffffff;"></div>
<div style="left:1463.0px;top:1140.0px;width:152.3px;height:60.0px;background:#ffffff;"></div>
<div style="left:1617.0px;top:1140.0px;width:284.0px;height:60.0px;background:#ffffff;"></div>
<div class="t" style="top:1148.6px;font-size:37.2px;line-height:43px;color:#000;left:279.0px;">A006</div>
<div class="t" style="top:1148.6px;font-size:37.2px;line-height:43px;color:#000;left:433.0px;">ABBADIA SAN SALVATORE</div>
<div class="t" style="top:1148.6px;font-size:37.2px;line-height:43px;color:#000;left:1291.0px;">SI</div>
<div class="t" style="top:1148.6px;font-size:37.2px;line-height:43px;color:#000;right:2247.0px;text-align:right;">53021</div>
<div class="t" style="top:1148.6px;font-size:37.2px;line-height:43px;color:#000;left:1622.0px;"></div>
<div style="left:207.5px;top:1200.0px;width:1693.5px;height:60.0px;background:#fbfbfb;"></div>
<div style="left:207.5px;top:1200.0px;width:65.3px;height:60.0px;background:#f5f5f5;"></div>
<div style="left:274.6px;top:1200.0px;width:152.2px;height:60.0px;background:#f5f5f5;"></div>
<div style="left:428.6px;top:1200.0px;width:855.9px;height:60.0px;background:#f5f5f5;"></div>
<div style="left:1286.2px;top:1200.0px;width:175.0px;height:60.0px;background:#f5f5f5;"></div>
<div style="left:1463.0px;top:1200.0px;width:152.3px;height:60.0px;background:#f5f5f5;"></div>
<div style="left:1617.0px;top:1200.0px;width:284.0px;height:60.0px;background:#f5f5f5;"></div>
<div class="t" style="top:1208.6px;font-size:37.2px;line-height:43px;color:#000;left:279.0px;">A005</div>
<div class="t" style="top:1208.6px;font-size:37.2px;line-height:43px;color:#000;left:433.0px;">ABBADIA LARIANA</div>
<div class="t" style="top:1208.6px;font-size:37.2px;line-height:43px;color:#000;left:1291.0px;">LC</div>
<div class="t" style="top:1208.6px;font-size:37.2px;line-height:43px;color:#000;right:2247.0px;text-align:right;">23821</div>
<div class="t" style="top:1208.6px;font-size:37.2px;line-height:43px;color:#000;left:1622.0px;"></div>
<div style="left:207.5px;top:1260.0px;width:1693.5px;height:60.0px;background:#ffffff;"></div>
<div style="left:207.5px;top:1260.0px;width:65.3px;height:60.0px;background:#ffffff;"></div>
<div style="left:274.6px;top:1260.0px;width:152.2px;height:60.0px;background:#ffffff;"></div>
<div style="left:428.6px;top:1260.0px;width:855.9px;height:60.0px;background:#ffffff;"></div>
<div style="left:1286.2px;top:1260.0px;width:175.0px;height:60.0px;background:#ffffff;"></div>
<div style="left:1463.0px;top:1260.0px;width:152.3px;height:60.0px;background:#ffffff;"></div>
<div style="left:1617.0px;top:1260.0px;width:284.0px;height:60.0px;background:#ffffff;"></div>
<div class="t" style="top:1268.6px;font-size:37.2px;line-height:43px;color:#000;left:279.0px;">A004</div>
<div class="t" style="top:1268.6px;font-size:37.2px;line-height:43px;color:#000;left:433.0px;">ABBADIA CERRETO</div>
<div class="t" style="top:1268.6px;font-size:37.2px;line-height:43px;color:#000;left:1291.0px;">LO</div>
<div class="t" style="top:1268.6px;font-size:37.2px;line-height:43px;color:#000;right:2247.0px;text-align:right;">26834</div>
<div class="t" style="top:1268.6px;font-size:37.2px;line-height:43px;color:#000;left:1622.0px;"></div>
<div style="left:207.5px;top:1320.0px;width:1693.5px;height:60.0px;background:#fbfbfb;"></div>
<div style="left:207.5px;top:1320.0px;width:65.3px;height:60.0px;background:#f5f5f5;"></div>
<div style="left:274.6px;top:1320.0px;width:152.2px;height:60.0px;background:#f5f5f5;"></div>
<div style="left:428.6px;top:1320.0px;width:855.9px;height:60.0px;background:#f5f5f5;"></div>
<div style="left:1286.2px;top:1320.0px;width:175.0px;height:60.0px;background:#f5f5f5;"></div>
<div style="left:1463.0px;top:1320.0px;width:152.3px;height:60.0px;background:#f5f5f5;"></div>
<div style="left:1617.0px;top:1320.0px;width:284.0px;height:60.0px;background:#f5f5f5;"></div>
<div class="t" style="top:1328.6px;font-size:37.2px;line-height:43px;color:#000;left:279.0px;">A003</div>
<div class="t" style="top:1328.6px;font-size:37.2px;line-height:43px;color:#000;left:433.0px;">ABBADIA ALPINA</div>
<div class="t" style="top:1328.6px;font-size:37.2px;line-height:43px;color:#000;left:1291.0px;"></div>
<div class="t" style="top:1328.6px;font-size:37.2px;line-height:43px;color:#000;right:2247.0px;text-align:right;"></div>
<div class="t" style="top:1328.6px;font-size:37.2px;line-height:43px;color:#000;left:1622.0px;">31/12/1983</div>
<div style="left:207.5px;top:1381.3px;width:1693.5px;height:57.7px;background:#e6edfe;"></div>
<div style="left:207.5px;top:1381.3px;width:65.3px;height:57.7px;background:#adc6fb;"></div>
<div style="left:274.6px;top:1381.3px;width:152.2px;height:57.7px;background:#adc6fb;"></div>
<div style="left:428.6px;top:1381.3px;width:855.9px;height:57.7px;background:#adc6fb;"></div>
<div style="left:1286.2px;top:1381.3px;width:175.0px;height:57.7px;background:#adc6fb;"></div>
<div style="left:1463.0px;top:1381.3px;width:152.3px;height:57.7px;background:#adc6fb;"></div>
<div style="left:1617.0px;top:1381.3px;width:284.0px;height:57.7px;background:#adc6fb;"></div>
<div class="t" style="top:1388.6px;font-size:37.2px;line-height:43px;color:#000;left:279.0px;">A001</div>
<div class="t" style="top:1388.6px;font-size:37.2px;line-height:43px;color:#000;left:433.0px;">ABANO TERME</div>
<div class="t" style="top:1388.6px;font-size:37.2px;line-height:43px;color:#000;left:1291.0px;">PD</div>
<div class="t" style="top:1388.6px;font-size:37.2px;line-height:43px;color:#000;right:2247.0px;text-align:right;">35031</div>
<div class="t" style="top:1388.6px;font-size:37.2px;line-height:43px;color:#000;left:1622.0px;"></div>
<svg class="a" style="left:228.0px;top:1398.0px;" width="15" height="25" viewBox="0 0 15 25"><path d="M0.8 1 L14 12.5 L0.8 24 Z" fill="#444"/></svg>
<div style="left:2120.2px;top:658.6px;width:51.6px;height:282.6px;border:1.7px solid #9e9e9e;background:#fff;"></div>
<svg class="a" style="left:2130px;top:670px;" width="33" height="260" viewBox="2130 670 33 260"><path d="M2138.4 680.8 H2154" stroke="#4a4a4a" stroke-width="3.2"/><path d="M2139.3999999999996 693 L2146.2 686.8 L2153.0 693" fill="none" stroke="#4a4a4a" stroke-width="3.9" stroke-linecap="round" stroke-linejoin="round"/><path d="M2139.3999999999996 730.2 L2146.2 724.2 L2153.0 730.2" fill="none" stroke="#4a4a4a" stroke-width="3.9" stroke-linecap="round" stroke-linejoin="round"/><path d="M2139.3999999999996 737.8 L2146.2 731.8 L2153.0 737.8" fill="none" stroke="#4a4a4a" stroke-width="3.9" stroke-linecap="round" stroke-linejoin="round"/><path d="M2139.3999999999996 780.2 L2146.2 774 L2153.0 780.2" fill="none" stroke="#4a4a4a" stroke-width="3.9" stroke-linecap="round" stroke-linejoin="round"/><path d="M2139.3999999999996 821.4 L2146.2 827.6 L2153.0 821.4" fill="none" stroke="#4a4a4a" stroke-width="3.9" stroke-linecap="round" stroke-linejoin="round"/><path d="M2139.3999999999996 864.6 L2146.2 870.6 L2153.0 864.6" fill="none" stroke="#4a4a4a" stroke-width="3.9" stroke-linecap="round" stroke-linejoin="round"/><path d="M2139.3999999999996 872.2 L2146.2 878.2 L2153.0 872.2" fill="none" stroke="#4a4a4a" stroke-width="3.9" stroke-linecap="round" stroke-linejoin="round"/><path d="M2139.3999999999996 905.2 L2146.2 911.4 L2153.0 905.2" fill="none" stroke="#4a4a4a" stroke-width="3.9" stroke-linecap="round" stroke-linejoin="round"/><path d="M2138.4 916.2 H2154" stroke="#4a4a4a" stroke-width="3.2"/></svg>
<svg class="a" style="left:2127px;top:996px;" width="39" height="38" viewBox="2127 996 39 38"><path d="M2131.800 1000.800 H2160.400 V1005.500 L2149.800 1018.500 V1029 H2142.400 V1018.500 L2131.800 1005.500 Z" fill="#fff" stroke="#444" stroke-width="3" stroke-linejoin="miter"/></svg>
<svg class="a" style="left:2127px;top:1048px;" width="39" height="39" viewBox="2127 1048 39 39"><path d="M2132 1053 L2139 1060" stroke="#444" stroke-width="2.6" stroke-linecap="round"/><path d="M2139 1060 L2158.500 1079.500" stroke="#444" stroke-width="5.6" stroke-linecap="round"/><path d="M2133.500 1080 L2152 1059.500" stroke="#444" stroke-width="5.6" stroke-linecap="round"/><path d="M2146 1056.500 Q2152 1050.500 2157.500 1054 Q2161.500 1057.500 2162 1063 L2158.500 1064.500 L2155 1061 L2151.500 1064.500 Z" fill="#444" stroke="#444" stroke-width="1.5" stroke-linejoin="round"/></svg>
<svg class="a" style="left:2128px;top:1100px;" width="36" height="36" viewBox="2128 1100 36 36"><path d="M2134.7 1114.9 L2146.0499999999997 1104.4 L2157.3999999999996 1114.9" fill="none" stroke="#444" stroke-width="5.2" stroke-linejoin="miter"/><path d="M2146.0499999999997 1106.9 V1126.1000000000001" stroke="#444" stroke-width="5.4"/><path d="M2131.7999999999997 1124.1000000000001 V1131.5000000000002 H2160.2999999999997 V1124.1000000000001" fill="none" stroke="#444" stroke-width="3.2"/></svg>
<div style="left:194.0px;top:1519.0px;width:1992.0px;height:2.0px;background:#d4d4d4;"></div>
<div class="btn" style="left:1654.0px;top:1556.0px;width:258.0px;height:56.0px;line-height:57.0px;"><u>S</u>eleziona</div>
<div class="btn" style="left:1916.0px;top:1556.0px;width:258.0px;height:56.0px;line-height:57.0px;"><u>U</u>scita</div>
<svg class="a" style="left:850px;top:600px;" width="320" height="440" viewBox="850 600 320 440"><path d="M1129.200 1011.200 L910 650" stroke="#e51c2c" stroke-width="7.8" stroke-linecap="round" fill="none"/><path d="M894.500 627 L929 648 L900.500 665 Z" fill="#e51c2c" stroke="#e51c2c" stroke-width="2" stroke-linejoin="round"/></svg>
</div>
</body></html>
